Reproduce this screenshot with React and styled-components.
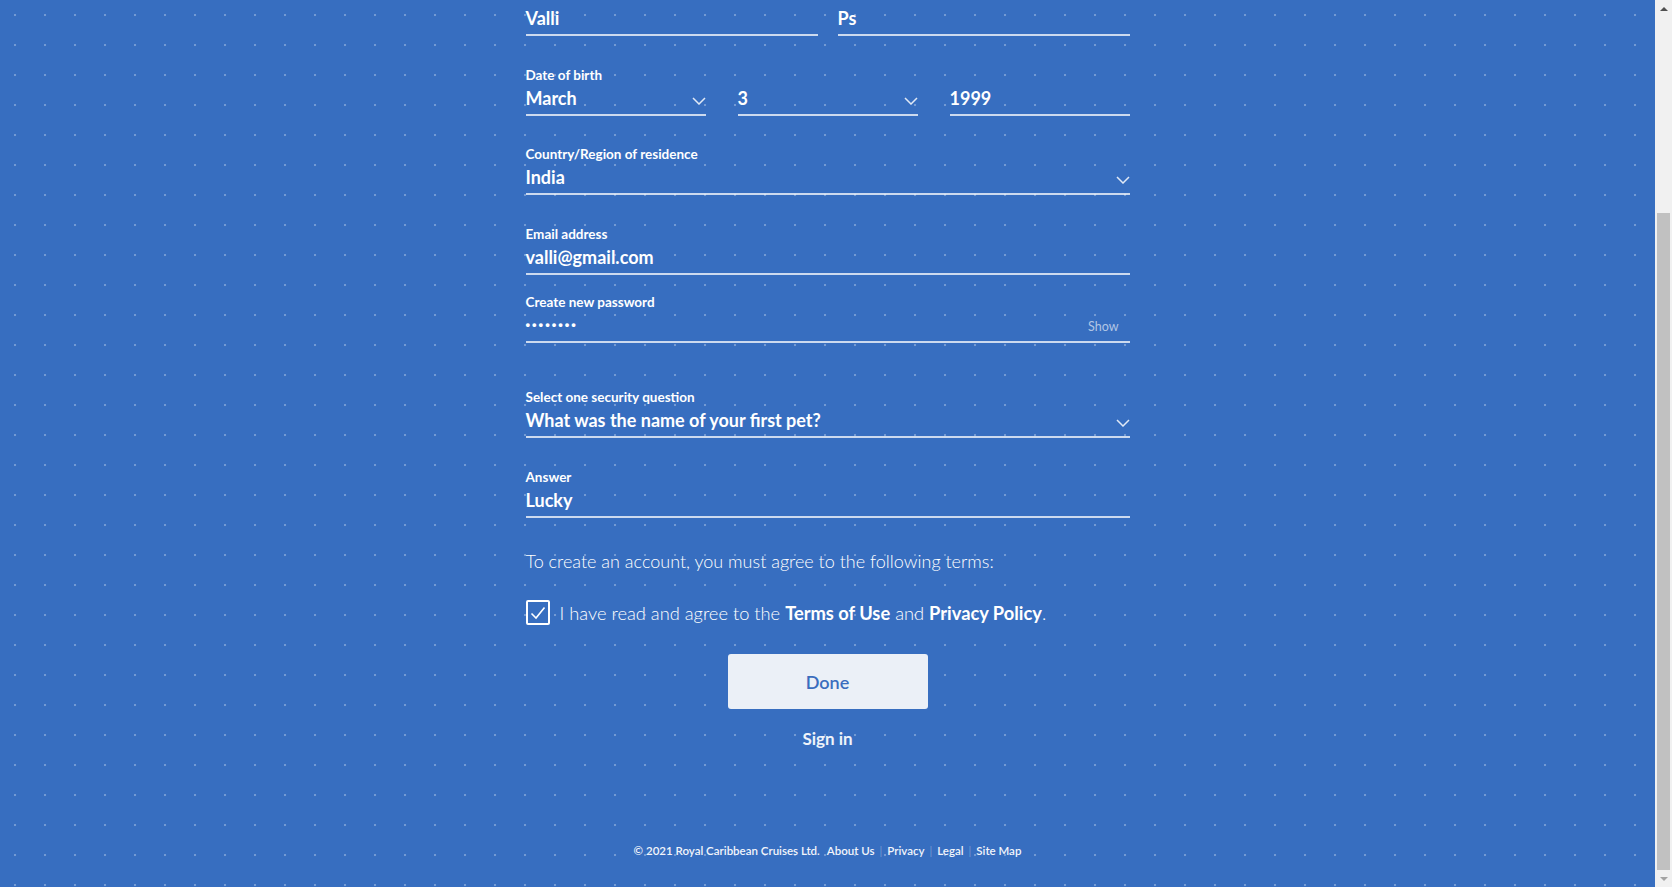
import React, { useLayoutEffect, useRef } from "react";
import styled, { createGlobalStyle } from "styled-components";

const GlobalStyle = createGlobalStyle`
  html, body {
    margin: 0;
    padding: 0;
    overflow: hidden;
  }
  body {
    font-family: Lato, "Open Sans", sans-serif;
    color: #ffffff;
  }
`;

const Chevron = () => (
  <svg width="14" height="8" viewBox="0 0 14 8" fill="none">
    <polyline
      points="1,1 7,7 13,1"
      stroke="rgba(255,255,255,0.85)"
      strokeWidth="1.5"
    />
  </svg>
);

const Check = () => (
  <svg width="16" height="14" viewBox="0 0 16 14" fill="none">
    <polyline points="1.5,7.5 6,12 14.5,1.5" stroke="#fff" strokeWidth="1.6" />
  </svg>
);

const Arrow = ({ up, color }) => (
  <svg width="8" height="4" viewBox="0 0 8 4">
    <polygon points={up ? "0,4 4,0 8,4" : "0,0 8,0 4,4"} fill={color} />
  </svg>
);

const Field = ({ label, value, select, password, space }) => (
  <FieldWrap $space={space}>
    <Label>{label}</Label>
    <ValueBox>
      {password ? <Dots>{value}</Dots> : <Value>{value}</Value>}
      {select && (
        <ChevronSlot>
          <Chevron />
        </ChevronSlot>
      )}
      {password && <Show>Show</Show>}
    </ValueBox>
  </FieldWrap>
);

const App = () => {
  const scroller = useRef(null);

  // the page is shown scrolled down to the end of the form
  useLayoutEffect(() => {
    const el = scroller.current;
    if (el) el.scrollTop = el.scrollHeight;
  }, []);

  return (
    <>
      <GlobalStyle />
      <Viewport>
        <Scroller ref={scroller}>
          <Page>
            <Form>
              <Row $cols="1fr 1fr" $gap={20}>
                <Field label="First name" value="Valli" />
                <Field label="Last name" value="Ps" />
              </Row>
              <Row $cols="1fr 1fr 1fr" $gap={32} $space={31}>
                <Field label="Date of birth" value="March" select />
                <Field label={"\u00a0"} value="3" select />
                <Field label={"\u00a0"} value="1999" />
              </Row>
              <Field
                label="Country/Region of residence"
                value="India"
                select
                space={30}
              />
              <Field label="Email address" value="valli@gmail.com" space={31} />
              <Field
                label="Create new password"
                value="••••••••"
                password
                space={19}
              />
              <Field
                label="Select one security question"
                value="What was the name of your first pet?"
                select
                space={46}
              />
              <Field label="Answer" value="Lucky" space={31} />

              <Terms>
                To create an account, you must agree to the following terms:
              </Terms>
              <CheckRow>
                <CheckBox>
                  <Check />
                </CheckBox>
                <CheckText>
                  I have read and agree to the <b>Terms of Use</b> and{" "}
                  <b>Privacy Policy</b>.
                </CheckText>
              </CheckRow>
              <DoneButton>Done</DoneButton>
              <SignIn>Sign in</SignIn>
            </Form>
            <Footer>
              <span>© 2021 Royal Caribbean Cruises Ltd.</span>
              <FooterLink>About Us</FooterLink>
              <Sep>|</Sep>
              <span>Privacy</span>
              <Sep>|</Sep>
              <span>Legal</span>
              <Sep>|</Sep>
              <span>Site Map</span>
            </Footer>
          </Page>
        </Scroller>
        <ScrollBar>
          <ArrowButton>
            <Arrow up color="#505050" />
          </ArrowButton>
          <Track>
            <Thumb $height={657} />
          </Track>
          <ArrowButton>
            <Arrow color="#a3a3a3" />
          </ArrowButton>
        </ScrollBar>
      </Viewport>
    </>
  );
};

const Viewport = styled.div`
  display: flex;
  height: 100vh;
`;

const Scroller = styled.div`
  flex: 1;
  overflow-y: auto;
  scrollbar-width: none;
  background-color: #376ec0;
  background-image: radial-gradient(
    circle at 1px 1px,
    rgba(255, 255, 255, 0.3) 1px,
    transparent 1.6px
  );
  background-size: 30px 30px;
  background-position: 14px 14px;
  &::-webkit-scrollbar {
    display: none;
  }
`;

const ScrollBar = styled.div`
  width: 17px;
  display: flex;
  flex-direction: column;
  background: #f1f1f1;
`;

const ArrowButton = styled.div`
  height: 17px;
  display: flex;
  align-items: center;
  justify-content: center;
`;

const Track = styled.div`
  flex: 1;
  display: flex;
  flex-direction: column;
  justify-content: flex-end;
  padding: 0 2px;
`;

const Thumb = styled.div`
  height: ${(p) => p.$height}px;
  background: #c1c1c1;
`;

const Page = styled.div`
  display: flex;
  flex-direction: column;
  align-items: center;
  padding: 101px 0 28px;
`;

const Form = styled.div`
  width: 604px;
  display: flex;
  flex-direction: column;
`;

const Row = styled.div`
  display: grid;
  grid-template-columns: ${(p) => p.$cols};
  column-gap: ${(p) => p.$gap}px;
  margin-top: ${(p) => p.$space || 0}px;
`;

const FieldWrap = styled.div`
  display: flex;
  flex-direction: column;
  margin-top: ${(p) => p.$space || 0}px;
`;

const Label = styled.div`
  font-size: 13.5px;
  line-height: 16px;
  font-weight: 700;
  margin-bottom: 3px;
  white-space: nowrap;
`;

const ValueBox = styled.div`
  display: flex;
  align-items: center;
  justify-content: space-between;
  height: 24px;
  padding-bottom: 4px;
  border-bottom: 2px solid rgba(255, 255, 255, 0.75);
`;

const Value = styled.div`
  font-size: 18px;
  line-height: 24px;
  font-weight: 700;
  margin-top: -1px;
`;

const Dots = styled.div`
  font-family: "Liberation Sans", sans-serif;
  font-size: 13px;
  line-height: 24px;
  font-weight: 700;
  letter-spacing: 2px;
`;

const ChevronSlot = styled.div`
  display: flex;
  padding-top: 6px;
`;

const Show = styled.div`
  font-size: 12.5px;
  line-height: 24px;
  color: rgba(255, 255, 255, 0.62);
  padding-right: 11px;
  padding-top: 4px;
`;

const Terms = styled.div`
  margin-top: 31px;
  font-size: 18px;
  line-height: 24px;
  font-weight: 300;
`;

const CheckRow = styled.div`
  display: flex;
  align-items: center;
  gap: 10px;
  margin-top: 27px;
`;

const CheckBox = styled.div`
  width: 20px;
  height: 21px;
  border: 2px solid #ffffff;
  border-radius: 2px;
  display: flex;
  align-items: center;
  justify-content: center;
`;

const CheckText = styled.div`
  font-size: 18.3px;
  line-height: 24px;
  font-weight: 300;
  b {
    font-weight: 700;
  }
`;

const DoneButton = styled.button`
  align-self: center;
  margin-top: 29px;
  width: 200px;
  height: 55px;
  border: none;
  border-radius: 3px;
  background: #ebf0f7;
  color: #3a6dbe;
  font-family: Lato, "Open Sans", sans-serif;
  font-size: 18px;
  font-weight: 600;
  cursor: pointer;
`;

const SignIn = styled.div`
  align-self: center;
  margin-top: 20px;
  font-size: 17px;
  line-height: 20px;
  font-weight: 700;
  color: #eef3fa;
`;

const Footer = styled.div`
  margin-top: 94px;
  display: flex;
  align-items: center;
  gap: 5px;
  font-size: 11.5px;
  line-height: 16px;
  font-weight: 600;
  color: #f2f5fb;
`;

const FooterLink = styled.span`
  margin-left: 2px;
`;

const Sep = styled.span`
  color: rgba(255, 255, 255, 0.5);
  font-weight: 300;
`;

export default App;
